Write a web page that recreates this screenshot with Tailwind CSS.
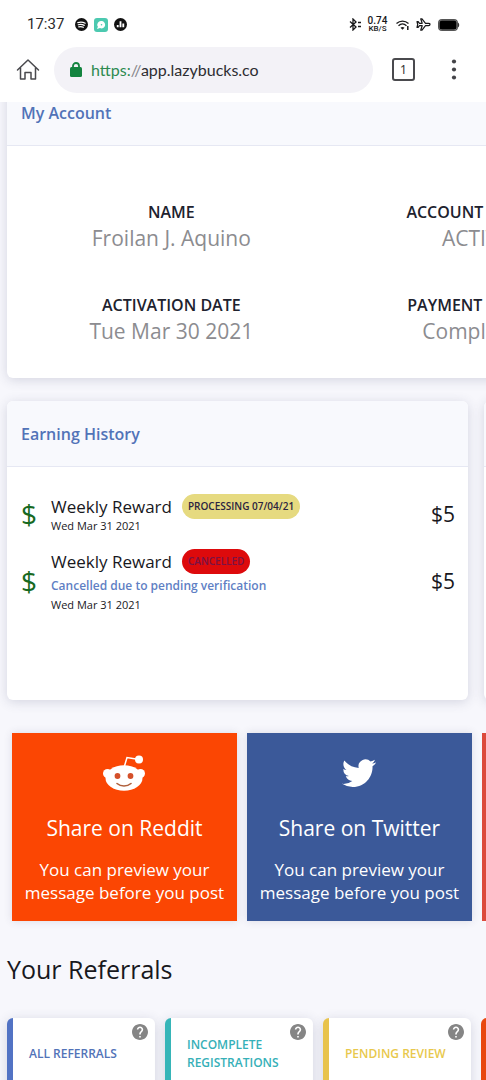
<!DOCTYPE html>
<html lang="en">
<head>
<meta charset="utf-8">
<meta name="viewport" content="width=device-width, initial-scale=1">
<title>LazyBucks</title>
<script src="https://cdn.jsdelivr.net/npm/@tailwindcss/browser@4"></script>
</head>
<body class="flex h-screen flex-col overflow-hidden bg-[#f7f7fc] font-['Open_Sans',sans-serif] text-[#18181d]">

<svg class="hidden" aria-hidden="true">
  <symbol id="help" viewBox="2 2 20 20"><path fill="currentColor" d="M12 2C6.48 2 2 6.48 2 12s4.48 10 10 10 10-4.48 10-10S17.52 2 12 2zm1 17h-2v-2h2v2zm2.07-7.75-.9.92C13.45 12.9 13 13.5 13 15h-2v-.5c0-1.1.45-2.1 1.17-2.83l1.24-1.26c.37-.36.59-.86.59-1.41 0-1.1-.9-2-2-2s-2 .9-2 2H8c0-2.21 1.79-4 4-4s4 1.79 4 4c0 .88-.36 1.68-.93 2.25z"/></symbol>
</svg>

<header class="z-10 shrink-0 bg-white">
  <div class="flex h-[46px] items-center pt-[3px] pr-[26px] pl-[27px]">
    <time class="font-['Roboto',sans-serif] text-[15px] text-[#2c2c2e]">17:37</time>
    <div class="ml-[11px] flex items-center gap-[6px]">
      <svg class="size-[13px]" viewBox="0 0 14 14"><circle cx="7" cy="7" r="7" fill="#111"/><g fill="none" stroke="#fff" stroke-linecap="round" stroke-width="1.3"><path d="M3 5c3-.9 5.600-.6 8 .6M3.500 7.300c2.400-.7 4.500-.4 6.500.6M4 9.500c1.900-.5 3.500-.3 5 .5"/></g></svg>
      <svg class="size-[14px]" viewBox="0 0 14 14"><rect width="14" height="14" rx="3" fill="#4cc9b0"/><path fill="#fff" d="M7.500 3a3.700 3.700 0 1 1-1.500 7.100L3 11l.9-2.300A3.700 3.700 0 0 1 7.500 3z"/><circle cx="7.500" cy="6.700" r=".8" fill="#4cc9b0"/></svg>
      <svg class="size-[13px]" viewBox="0 0 14 14"><circle cx="7" cy="7" r="7" fill="#111"/><path fill="#fff" d="M3 7.500h2V10H3zM6 3.500h2V10H6zM9 6h2v4H9z"/></svg>
    </div>
    <div class="ml-auto flex items-center text-[#18181a]">
      <svg class="h-[13px] w-[14px]" viewBox="0 0 14 13" fill="none" stroke="currentColor" stroke-width="1.300"><path d="M2 3.500 8 9l-3 3V1l3 3-6 5.500"/><path d="M10 4.500h3M10 8.500h3" stroke-width="1.600"/></svg>
      <div class="ml-[5px] w-[21px] text-center font-['Roboto',sans-serif] font-medium"><div class="text-[10px] leading-[8px]">0.74</div><div class="text-[8px] leading-[8px]">KB/S</div></div>
      <svg class="ml-2 h-[12px] w-[14px]" viewBox="0 0 14 12" fill="none" stroke="currentColor" stroke-width="1.300"><path d="M.5 4.500c3.500-3.300 8.500-3.300 12 0M2.500 6.700c2.400-2.200 5.600-2.200 8 0"/><path d="m4.500 8.700 2 2 2-2c-1.200-1-2.800-1-4 0z" fill="currentColor" stroke="none"/><path d="M11.800 7v4" stroke-width="1.500"/></svg>
      <svg class="ml-[6px] h-[13px] w-[15px]" viewBox="0 0 15 13" fill="none" stroke="currentColor" stroke-width="1.200" stroke-linejoin="round"><path d="M14 6.500c0-.8-.7-1.200-1.500-1.200H9.500L6 .8H4.700l1.500 4.500H3.500L2 3.500H1l.7 3-.7 3h1l1.500-1.800h2.700l-1.500 4.500H6l3.500-4.500h3c.8 0 1.500-.4 1.500-1.200z"/></svg>
      <svg class="ml-[7px] h-[12px] w-[22px]" viewBox="0 0 22 12"><rect x=".6" y=".6" width="18.800" height="10.800" rx="3.500" fill="#aaa" stroke="#555" stroke-width="1.200"/><rect x="1.500" y="1.500" width="17" height="9" rx="2.500" fill="#000"/><path d="M20 3.500c1.600.8 1.600 4.200 0 5z" fill="#333"/></svg>
    </div>
  </div>
  <div class="flex h-[56px] items-start pl-[16px]">
    <button type="button" aria-label="Home" class="mt-[12px]"><svg class="size-6" viewBox="0 0 24 24" fill="none" stroke="#4a4a4e" stroke-width="1.500" stroke-linejoin="round" stroke-linecap="round"><path d="M1.500 12 12 2l10.500 10M4.500 9.800V21H9v-6.500h6V21h4.500V9.800"/></svg></button>
    <div class="mt-[1px] ml-[14px] flex h-[46px] min-w-0 flex-1 items-center rounded-full bg-[#f3f2f7] pl-[16px]">
      <svg class="h-[16px] w-[12px] shrink-0" viewBox="0 0 12 16"><rect y="5" width="12" height="10" rx="1.500" fill="#13843f"/><path d="M3 6V4a3 3 0 0 1 6 0v2" fill="none" stroke="#13843f" stroke-width="1.800"/></svg>
      <a href="#" class="ml-[9px] font-['Lato',sans-serif] text-[16px] leading-6 text-[#2d2d31]"><span class="text-[#2d8a50]">https:</span><span class="text-[#85858a]">//</span>app.lazybucks.co</a>
    </div>
    <button type="button" aria-label="Tabs" class="mt-[12px] ml-[19px] size-[23px] rounded-[3px] border-2 border-[#4a4a4e] font-['Noto_Sans',sans-serif] text-xs leading-[19px] text-[#333]">1</button>
    <button type="button" aria-label="Menu" class="mt-[12px] mr-[22px] ml-[29px]"><svg class="h-[23px] w-[20px]" viewBox="0 0 20 23" fill="#444448"><circle cx="10" cy="3.500" r="2.100"/><circle cx="10" cy="11.500" r="2.100"/><circle cx="10" cy="19.500" r="2.100"/></svg></button>
  </div>
</header>

<main class="min-h-0 flex-1 overflow-hidden pl-[7px]">
  <div class="-mt-[22px] w-[193vw]">

    <section class="overflow-hidden rounded-md bg-white shadow-[0_2px_12px_rgba(58,59,99,0.18)]">
      <h2 class="flex h-[66px] items-center border-b border-[#e6e8f3] bg-[#f8f9fd] px-[14px] text-[16px] font-semibold text-[#5273b8]">My Account</h2>
      <dl class="grid grid-cols-3 gap-y-[41px] px-[12px] pt-[53px] pb-[34px] text-center">
        <div><dt class="text-[16px] leading-[26px] font-semibold text-[#20222e]">NAME</dt><dd class="text-[21px] leading-[26px] text-[#8c8c90]">Froilan J. Aquino</dd></div>
        <div><dt class="text-[16px] leading-[26px] font-semibold text-[#20222e]">ACCOUNT STATUS</dt><dd class="text-[21px] leading-[26px] text-[#8c8c90]">ACTIVE</dd></div>
        <div></div>
        <div><dt class="text-[16px] leading-[26px] font-semibold text-[#20222e]">ACTIVATION DATE</dt><dd class="text-[21px] leading-[26px] text-[#8c8c90]">Tue Mar 30 2021</dd></div>
        <div><dt class="text-[16px] leading-[26px] font-semibold text-[#20222e]">PAYMENT STATUS</dt><dd class="text-[21px] leading-[26px] text-[#8c8c90]">Completed</dd></div>
      </dl>
    </section>

    <div class="mt-[23px] grid grid-cols-2 gap-4">
      <section class="h-[299px] overflow-hidden rounded-md bg-white shadow-[0_2px_12px_rgba(58,59,99,0.18)]">
        <h2 class="flex h-[66px] items-center border-b border-[#e6e8f3] bg-[#f8f9fd] px-[14px] text-[16px] font-semibold text-[#5273b8]">Earning History</h2>
        <ul class="flex flex-col gap-4 pt-[27px] pr-[13px] pl-[14px]">
          <li class="flex items-center">
            <span class="w-[30px] text-[28px] leading-[30px] text-[#17691f]">$</span>
            <div class="flex-1">
              <div class="flex h-[25px] items-center gap-[10px]"><span class="text-[17px]">Weekly Reward</span><span class="rounded-full bg-[#e6da80] px-[6px] text-[10px] leading-[25px] font-semibold text-[#2b2440]">PROCESSING 07/04/21</span></div>
              <div class="text-[11px] leading-[14px]">Wed Mar 31 2021</div>
            </div>
            <span class="text-[21px] leading-6">$5</span>
          </li>
          <li class="flex items-center">
            <span class="w-[30px] text-[28px] leading-[30px] text-[#17691f]">$</span>
            <div class="flex-1">
              <div class="flex h-[25px] items-center gap-[10px]"><span class="text-[17px]">Weekly Reward</span><span class="rounded-full bg-[#dd0a0c] px-[6px] text-[10px] leading-[25px] font-semibold text-[#7a1245]">CANCELLED</span></div>
              <div class="text-[12px] leading-[24px] font-semibold text-[#5f7fc4]">Cancelled due to pending verification</div>
              <div class="text-[11px] leading-[14px]">Wed Mar 31 2021</div>
            </div>
            <span class="text-[21px] leading-6">$5</span>
          </li>
        </ul>
      </section>
      <section class="overflow-hidden rounded-md bg-white shadow-[0_2px_12px_rgba(58,59,99,0.18)]"><div class="h-[66px] border-b border-[#e6e8f3] bg-[#f8f9fd]"></div></section>
    </div>

    <div class="mt-[33px] grid grid-cols-4 gap-[10px] pr-[3px] pl-[5px] text-center text-white">
      <a href="#" class="flex h-[188px] flex-col items-center bg-[#fb4603] pt-[20px] shadow-[0_0_8px_rgba(58,59,99,0.15)]">
        <svg class="h-[40px] w-[44px]" viewBox="0 0 44 40"><g fill="#fff"><circle cx="5.500" cy="20.500" r="4.500"/><circle cx="38.500" cy="20.500" r="4.500"/><ellipse cx="22" cy="25" rx="18.500" ry="12.800"/><circle cx="37" cy="6.500" r="4"/></g><path d="M22.500 13 25 4.500l9 1.500" fill="none" stroke="#fff" stroke-width="1.500"/><circle cx="15.500" cy="23" r="2.900" fill="#d4502a"/><circle cx="28.500" cy="23" r="2.900" fill="#d4502a"/><path d="M15 30.500c4 3.400 10 3.400 14 0" fill="none" stroke="#b0603c" stroke-width="1.600" stroke-linecap="round"/></svg>
        <span class="mt-[20px] text-[21px] leading-[30px]">Share on Reddit</span>
        <span class="mt-[15px] text-[17px] leading-[23px]">You can preview your<br>message before you post</span>
      </a>
      <a href="#" class="flex h-[188px] flex-col items-center bg-[#3b5999] pt-[20px] shadow-[0_0_8px_rgba(58,59,99,0.15)]">
        <svg class="h-[40px] w-[34px]" viewBox="0 -2.200 24 28.200" fill="#fff"><path d="M23.954 4.569a10 10 0 0 1-2.825.775 4.958 4.958 0 0 0 2.163-2.723c-.951.555-2.005.959-3.127 1.184a4.920 4.920 0 0 0-8.384 4.482C7.691 8.094 4.066 6.130 1.640 3.161a4.822 4.822 0 0 0-.666 2.475c0 1.710.87 3.213 2.188 4.096a4.904 4.904 0 0 1-2.228-.616v.061a4.923 4.923 0 0 0 3.946 4.827 4.996 4.996 0 0 1-2.212.085 4.937 4.937 0 0 0 4.604 3.417 9.868 9.868 0 0 1-6.102 2.105c-.39 0-.779-.023-1.170-.067a13.995 13.995 0 0 0 7.557 2.209c9.054 0 13.999-7.496 13.999-13.986 0-.209 0-.42-.015-.63a9.936 9.936 0 0 0 2.460-2.548z"/></svg>
        <span class="mt-[20px] text-[21px] leading-[30px]">Share on Twitter</span>
        <span class="mt-[15px] text-[17px] leading-[23px]">You can preview your<br>message before you post</span>
      </a>
      <div class="bg-[#dc4a3c]"></div>
      <div class="bg-[#dc4a3c]"></div>
    </div>

    <h1 class="mt-[30px] text-[25px] leading-[36px]">Your Referrals</h1>

    <div class="mt-[31px] grid grid-cols-6 gap-[10px]">
      <article class="h-[130px] rounded-md border-l-6 border-[#5273c4] bg-white shadow-[0_2px_12px_rgba(58,59,99,0.18)]">
        <div class="flex justify-end pt-[6px] pr-[7px]"><button type="button" aria-label="Help" class="h-[11px] text-[#858585]"><svg class="size-4"><use href="#help"/></svg></button></div>
        <h3 class="flex h-[38px] items-center pl-4 text-[12px] leading-[18px] font-semibold text-[#5273b8]">ALL REFERRALS</h3>
        <p class="pt-[3px] pl-4 text-[21px] leading-[24px]">0</p>
      </article>
      <article class="h-[130px] rounded-md border-l-6 border-[#36b5b8] bg-white shadow-[0_2px_12px_rgba(58,59,99,0.18)]">
        <div class="flex justify-end pt-[6px] pr-[7px]"><button type="button" aria-label="Help" class="h-[11px] text-[#858585]"><svg class="size-4"><use href="#help"/></svg></button></div>
        <h3 class="flex h-[38px] items-center pl-4 text-[12px] leading-[18px] font-semibold text-[#36b0b8]">INCOMPLETE REGISTRATIONS</h3>
        <p class="pt-[3px] pl-4 text-[21px] leading-[24px]">0</p>
      </article>
      <article class="h-[130px] rounded-md border-l-6 border-[#e8c34c] bg-white shadow-[0_2px_12px_rgba(58,59,99,0.18)]">
        <div class="flex justify-end pt-[6px] pr-[7px]"><button type="button" aria-label="Help" class="h-[11px] text-[#858585]"><svg class="size-4"><use href="#help"/></svg></button></div>
        <h3 class="flex h-[38px] items-center pl-4 text-[12px] leading-[18px] font-semibold text-[#e8c84c]">PENDING REVIEW</h3>
        <p class="pt-[3px] pl-4 text-[21px] leading-[24px]">0</p>
      </article>
      <article class="h-[130px] rounded-md border-l-6 border-[#e8480f] bg-white"></article>
    </div>
  </div>
</main>
</body>
</html>
